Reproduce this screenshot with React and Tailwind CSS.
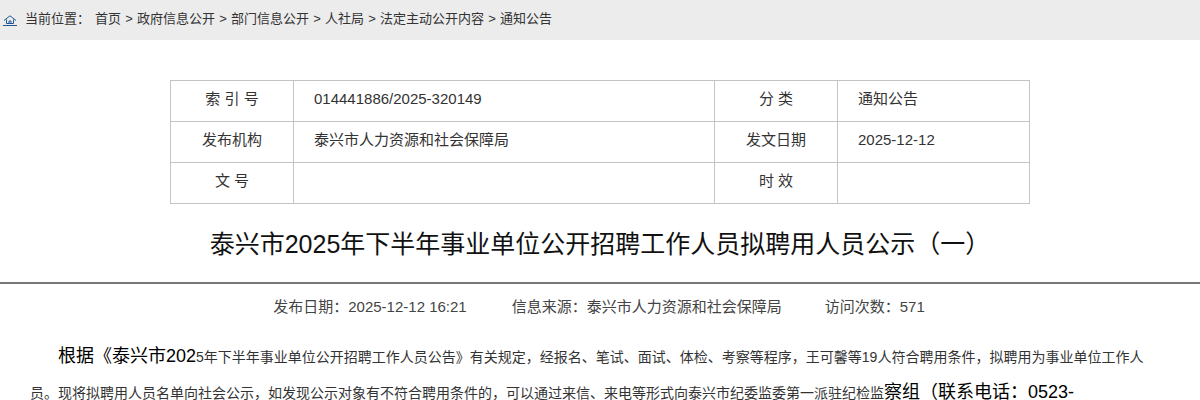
const zh = "font-['Liberation_Sans','Noto_Sans_CJK_SC',sans-serif]";

function HomeIcon() {
  return (
    <svg width="14" height="11" viewBox="0 0 14 11" fill="none" stroke="#1f5497" strokeWidth="1" className="mr-2 mt-[3px] shrink-0">
      <path d="M1 5.5 7 .8l6 4.7" />
      <path d="M3.5 4.5V8.5h7V4.5" />
      <path d="M6 8.5V6h2v2.5" />
      <path d="M0 10.5h14" />
    </svg>
  );
}

function Crumbs() {
  const items = ["首页", "政府信息公开", "部门信息公开", "人社局", "法定主动公开内容", "通知公告"];
  return (
    <div className="h-10 bg-[#ececec] flex items-center pl-[3px] pb-[3px] text-[13px] text-[#333]">
      <HomeIcon />
      <span className="mr-[5px]">当前位置：</span>
      {items.map((item, i) => (
        <span key={item} className="flex items-center">
          {i > 0 && <span className="mx-[4.2px]">&gt;</span>}
          <span>{item}</span>
        </span>
      ))}
    </div>
  );
}

function Label({ children, border }) {
  return <div className={`w-[123px] h-10 pb-1 flex items-center justify-center ${border}`}>{children}</div>;
}

function Value({ children, width, border }) {
  return <div className={`${width} h-10 pb-1 flex items-center pl-5 ${border}`}>{children}</div>;
}

function InfoTable() {
  const rows = [
    ["索 引 号", "014441886/2025-320149", "分 类", "通知公告"],
    ["发布机构", "泰兴市人力资源和社会保障局", "发文日期", "2025-12-12"],
    ["文 号", "", "时 效", ""],
  ];
  return (
    <div className="w-[860px] mx-auto mt-10 border border-[#c4c4c4] text-[15px] text-[#333]">
      {rows.map((row, i) => (
        <div key={row[0]} className={`flex ${i < 2 ? "border-b border-[#c4c4c4]" : ""}`}>
          <Label border="border-r border-[#c4c4c4]">{row[0]}</Label>
          <Value width="w-[421px]" border="border-r border-[#c4c4c4]">{row[1]}</Value>
          <Label border="border-r border-[#c4c4c4]">{row[2]}</Label>
          <Value width="flex-1">{row[3]}</Value>
        </div>
      ))}
    </div>
  );
}

export default function App() {
  return (
    <div className={`${zh} h-[400px] overflow-hidden bg-white`}>
      <Crumbs />
      <InfoTable />
      <h1 className="mt-[22px] text-center text-[25px] leading-9 text-[#111]">
        泰兴市2025年下半年事业单位公开招聘工作人员拟聘用人员公示（一）
      </h1>
      <div className="mt-[20px] border-t-2 border-[#777]" />
      <div className="flex justify-center pr-[2px] mt-[11px] text-[15px] leading-6 text-[#444]">
        <span>发布日期：2025-12-12 16:21</span>
        <span className="ml-[45px]">信息来源：泰兴市人力资源和社会保障局</span>
        <span className="ml-[43px]">访问次数：571</span>
      </div>
      <div className="mt-[20px] px-[30px] text-sm leading-9 text-[#333]">
        <p className="indent-7">
          <span className="text-lg text-black">根据《泰兴市202</span>5年下半年事业单位公开招聘工作人员公告》有关规定，经报名、笔试、面试、体检、考察等程序，王可馨等19人符合聘用条件，拟聘用为事业单位工作人员。现将拟聘用人员名单向社会公示，如发现公示对象有不符合聘用条件的，可以通过来信、来电等形式向泰兴市纪委监委第一派驻纪检监<span className="text-lg text-black">察组（联系电话：0523-</span>
        </p>
      </div>
    </div>
  );
}
